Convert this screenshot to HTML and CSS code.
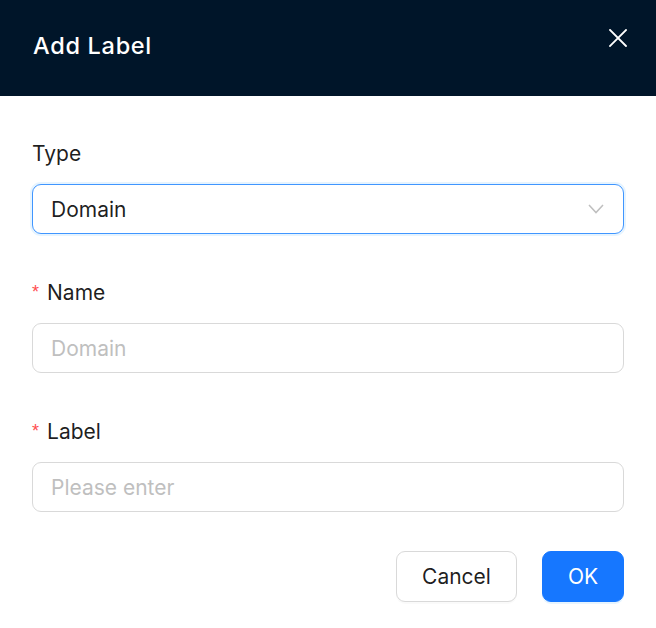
FILE: index.html
```html
<!DOCTYPE html>
<html lang="en">
<head>
<meta charset="utf-8">
<title>Add Label</title>
<link rel="stylesheet" href="styles.css">
</head>
<body>
<div class="modal">
  <div class="modal-header">
    <div class="modal-title">Add Label</div>
    <button class="modal-close" aria-label="Close">
      <svg width="18" height="18" viewBox="0 0 18 18"><path d="M1 1 L17 17 M17 1 L1 17" stroke="#fff" stroke-width="1.8" fill="none" stroke-linecap="square"/></svg>
    </button>
  </div>
  <div class="modal-body">
    <div class="form-item">
      <label class="form-label">Type</label>
      <div class="select select-focused">
        <span class="select-value">Domain</span>
        <svg class="select-arrow" width="16" height="10" viewBox="0 0 16 10"><path d="M1 1 L8 8.6 L15 1" stroke="#bfbfbf" stroke-width="1.5" fill="none"/></svg>
      </div>
    </div>
    <div class="form-item">
      <label class="form-label"><span class="required">*</span>Name</label>
      <input class="input" type="text" placeholder="Domain">
    </div>
    <div class="form-item">
      <label class="form-label"><span class="required">*</span>Label</label>
      <input class="input" type="text" placeholder="Please enter">
    </div>
    <div class="modal-footer">
      <button class="btn btn-default">Cancel</button>
      <button class="btn btn-primary">OK</button>
    </div>
  </div>
</div>
</body>
</html>
```

FILE: styles.css
```css
* { box-sizing: border-box; }
html, body {
  margin: 0;
  padding: 0;
  background: #ffffff;
  font-family: Inter, "Noto Sans", "Liberation Sans", sans-serif;
  color: rgba(0, 0, 0, 0.88);
}
.modal {
  width: 656px;
  height: 628px;
  background: #fff;
}
.modal-header {
  height: 96px;
  background: #001529;
  display: flex;
  align-items: flex-start;
  justify-content: space-between;
  padding: 0 29px 0 33px;
}
.modal-title {
  margin-top: 30px;
  font-size: 23.5px;
  line-height: 32px;
  font-weight: 500;
  letter-spacing: 0.7px;
  color: #fff;
}
.modal-close {
  margin-top: 29px;
  width: 18px;
  height: 18px;
  padding: 0;
  border: 0;
  background: transparent;
  display: flex;
}
.modal-body {
  padding: 43px 32px 0 32px;
}
.form-item {
  display: flex;
  flex-direction: column;
  margin-bottom: 44px;
}
.form-label {
  font-size: 21px;
  line-height: 30px;
  height: 30px;
  margin-bottom: 15px;
  display: flex;
  align-items: baseline;
}
.required {
  color: #ff4d4f;
  font-size: 18px;
  margin-right: 8px;
  font-family: SimSun, "Liberation Sans", sans-serif;
  position: relative;
  top: -2px;
}
.select, .input {
  height: 50px;
  width: 592px;
  border: 1px solid #d9d9d9;
  border-radius: 9px;
  font-family: inherit;
  font-size: 21px;
  color: rgba(0, 0, 0, 0.88);
  background: #fff;
}
.select {
  display: flex;
  align-items: center;
  justify-content: space-between;
  padding: 0 19px 0 18px;
}
.select-focused {
  border-color: #4096ff;
  box-shadow: 0 0 0 2px rgba(5, 145, 255, 0.1);
}
.input {
  padding: 0 18px;
  outline: none;
}
.input::placeholder {
  color: #bfbfbf;
}
.modal-footer {
  display: flex;
  justify-content: flex-end;
  gap: 25px;
  margin-top: -5px;
}
.btn {
  height: 51px;
  border-radius: 9px;
  font-family: inherit;
  font-size: 21px;
  padding: 0 20px;
  cursor: pointer;
}
.btn-default {
  background: #fff;
  border: 1px solid #d9d9d9;
  color: rgba(0, 0, 0, 0.88);
  box-shadow: 0 2px 0 rgba(0, 0, 0, 0.02);
  width: 121px;
}
.btn-primary {
  background: #1677ff;
  border: 1px solid #1677ff;
  color: #fff;
  box-shadow: 0 2px 0 rgba(5, 145, 255, 0.1);
  width: 82px;
}
```
